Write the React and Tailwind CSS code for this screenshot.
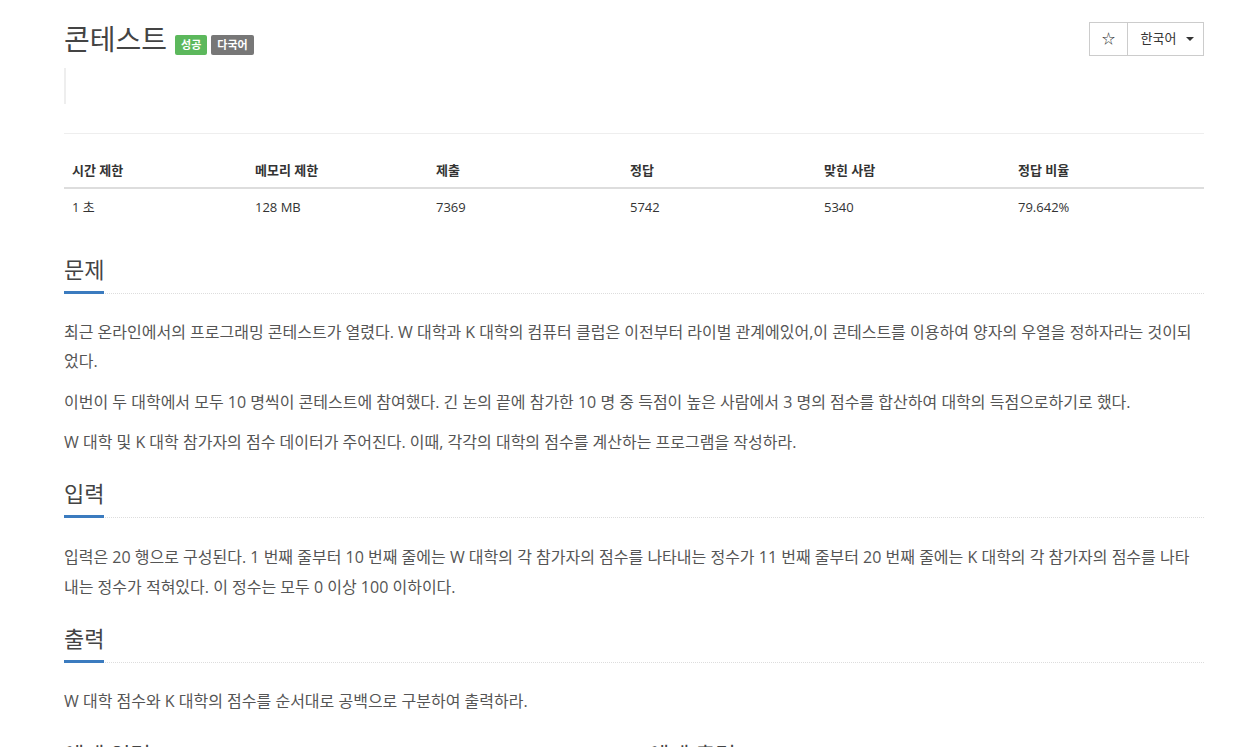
import { useState } from "react";

const font = { fontFamily: '"Open Sans", "Noto Sans CJK KR", sans-serif' };

const stats = [
  { label: "시간 제한", value: "1 초", w: "w-[183px]" },
  { label: "메모리 제한", value: "128 MB", w: "w-[181px]" },
  { label: "제출", value: "7369", w: "w-[194px]" },
  { label: "정답", value: "5742", w: "w-[194px]" },
  { label: "맞힌 사람", value: "5340", w: "w-[194px]" },
  { label: "정답 비율", value: "79.642%", w: "w-[194px]" },
];

function Section({ title, children, className = "mt-[19px]" }) {
  return (
    <section className={className}>
      <div className="border-b border-dotted border-[#ddd]">
        <h2 className="-mb-px inline-block border-b-[3px] border-[#3b7bbf] pb-[5px] text-[22px] leading-[34px] text-[#444]">
          {title}
        </h2>
      </div>
      <div className="pt-[24px] text-[16px] leading-[29px] text-[#555]">{children}</div>
    </section>
  );
}

export default function App() {
  const [starred, setStarred] = useState(false);

  return (
    <div className="min-h-screen bg-white" style={font}>
      <div className="ml-[64px] w-[1140px]">
        {/* Title */}
        <div className="flex items-start justify-between pt-[22px]">
          <div className="flex items-end gap-1">
            <h1 className="text-[28px] leading-[34px] text-[#444]">콘테스트</h1>
            <span className="ml-[4px] mb-[1px] rounded-[2px] bg-[#5cb85c] px-[6px] py-[2px] text-[11px] font-bold leading-[16px] text-white">
              성공
            </span>
            <span className="mb-[1px] rounded-[2px] bg-[#777] px-[6px] py-[2px] text-[11px] font-bold leading-[16px] text-white">
              다국어
            </span>
          </div>
          <div className="flex h-[34px] text-[13px] text-[#333]">
            <button
              onClick={() => setStarred(!starred)}
              className="flex w-[39px] items-center justify-center border border-[#ccc] bg-white"
            >
              {starred ? "★" : "☆"}
            </button>
            <button className="-ml-px flex w-[77px] items-center justify-center gap-[10px] border border-[#ccc] bg-white pl-1">
              한국어
              <span className="h-0 w-0 border-x-[4px] border-t-[4px] border-x-transparent border-t-[#333]" />
            </button>
          </div>
        </div>

        {/* Empty blockquote */}
        <div className="mt-[12px] h-[36px] border-l-[2px] border-[#eee]" />

        <hr className="mt-[29px] border-t border-[#eee]" />

        {/* Stats table */}
        <table className="mt-[20px] w-full border-collapse text-[13px] text-[#333]">
          <thead>
            <tr className="border-b-2 border-[#ddd]">
              {stats.map((s) => (
                <th key={s.label} className={`${s.w} px-2 pb-[7px] pt-[6px] text-left font-bold leading-[20px]`}>
                  {s.label}
                </th>
              ))}
            </tr>
          </thead>
          <tbody>
            <tr>
              {stats.map((s) => (
                <td key={s.label} className="px-2 py-[8px] leading-[20px]">
                  {s.value}
                </td>
              ))}
            </tr>
          </tbody>
        </table>

        <Section title="문제" className="mt-[27px]">
          <p>
            최근 온라인에서의 프로그래밍 콘테스트가 열렸다. W 대학과 K 대학의 컴퓨터 클럽은 이전부터 라이벌 관계에있어,이
            콘테스트를 이용하여 양자의 우열을 정하자라는 것이되었다.
          </p>
          <p className="mt-[12px]">
            이번이 두 대학에서 모두 10 명씩이 콘테스트에 참여했다. 긴 논의 끝에 참가한 10 명 중 득점이 높은 사람에서 3
            명의 점수를 합산하여 대학의 득점으로하기로 했다.
          </p>
          <p className="mt-[11px]">
            W 대학 및 K 대학 참가자의 점수 데이터가 주어진다. 이때, 각각의 대학의 점수를 계산하는 프로그램을 작성하라.
          </p>
        </Section>

        <Section title="입력">
          <p className="leading-[30px]">
            입력은 20 행으로 구성된다. 1 번째 줄부터 10 번째 줄에는 W 대학의 각 참가자의 점수를 나타내는 정수가 11 번째
            줄부터 20 번째 줄에는 K 대학의 각 참가자의 점수를 나타내는 정수가 적혀있다. 이 정수는 모두 0 이상 100 이하이다.
          </p>
        </Section>

        <Section title="출력">
          <p>W 대학 점수와 K 대학의 점수를 순서대로 공백으로 구분하여 출력하라.</p>
        </Section>

        <div className="grid grid-cols-2 gap-[30px]">
          <Section title="예제 입력 1" className="mt-[21px]">
            <pre className="border border-[#ccc] bg-[#f5f5f5] p-2 text-[13px]">23</pre>
          </Section>
          <Section title="예제 출력 1" className="mt-[21px]">
            <pre className="border border-[#ccc] bg-[#f5f5f5] p-2 text-[13px]">240 250</pre>
          </Section>
        </div>
      </div>
    </div>
  );
}
